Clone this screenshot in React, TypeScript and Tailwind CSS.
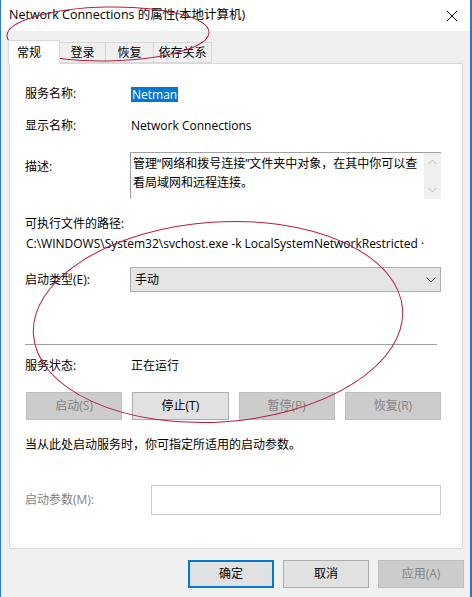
import React from "react";

const FONT = { fontFamily: '"Open Sans", "Noto Sans CJK SC", sans-serif' };

function Btn({ label, disabled, primary, className = "" }: { label: string; disabled?: boolean; primary?: boolean; className?: string }) {
  const base = "flex items-center justify-center text-[12px] ";
  const look = disabled
    ? "bg-[#cccccc] border border-[#bfbfbf] text-[#838383]"
    : primary
    ? "bg-[#e1e1e1] border-2 border-[#0078d7] text-black"
    : "bg-[#e1e1e1] border border-[#adadad] text-black";
  return <div className={base + look + " " + className}>{label}</div>;
}

export default function App() {
  return (
    <div className="relative w-[472px] h-[597px] bg-[#f0f0f0] border-l border-r-2 border-[#2a7ad3] text-[12px] text-black overflow-hidden" style={FONT}>
      {/* title bar */}
      <div className="h-[31px] bg-white flex items-center justify-between pl-[8px] pr-[8px]">
        <span className="text-[12.5px]">Network Connections 的属性(本地计算机)</span>
        <svg width="12" height="12" viewBox="0 0 12 12" className="mr-[4px]">
          <path d="M1 1 L11 11 M11 1 L1 11" stroke="#000" strokeWidth="1" />
        </svg>
      </div>

      {/* tabs */}
      <div className="flex items-end h-[32px] pl-[7px] pt-[8px]">
        <div className="h-[24px] w-[52px] bg-white border border-b-0 border-[#d9d9d9] flex items-center pl-[8px] relative z-10 -mb-px">常规</div>
        <div className="h-[21px] w-[46px] border border-l-0 border-[#d9d9d9] flex items-center justify-center">登录</div>
        <div className="h-[21px] w-[48px] border border-l-0 border-[#d9d9d9] flex items-center justify-center">恢复</div>
        <div className="h-[21px] w-[58px] border border-l-0 border-[#d9d9d9] flex items-center justify-center">依存关系</div>
      </div>

      {/* panel */}
      <div className="ml-[8px] mr-[7px] h-[486px] bg-white border border-[#d9d9d9] pl-[15px] pr-[21px] flex flex-col">
        <div className="flex items-center h-[20px] mt-[20px]">
          <div className="w-[106px]">服务名称:</div>
          <div className="bg-[#0078d7] text-white px-px leading-[15px]">Netman</div>
        </div>
        <div className="flex items-center h-[20px] mt-[12px]">
          <div className="w-[106px]">显示名称:</div>
          <div>Network Connections</div>
        </div>
        <div className="flex items-start mt-[16px]">
          <div className="w-[105px] mt-[6px]">描述:</div>
          <div className="flex-1 h-[47px] border border-[#a0a0a0] border-r-0 border-b-0 flex">
            <div className="flex-1 pl-[2px] pt-[1px] leading-[19px]">
              管理“网络和拨号连接”文件夹中对象，在其中你可以查看局域网和远程连接。
            </div>
            <div className="w-[17px] bg-[#f0f0f0] flex flex-col justify-between items-center py-[6px]">
              <svg width="9" height="6" viewBox="0 0 9 6"><path d="M0.5 5 L4.5 1 L8.5 5" stroke="#c2c2c2" fill="none" /></svg>
              <svg width="9" height="6" viewBox="0 0 9 6"><path d="M0.5 1 L4.5 5 L8.5 1" stroke="#c2c2c2" fill="none" /></svg>
            </div>
          </div>
        </div>
        <div className="h-[20px] flex items-center mt-[15px]">可执行文件的路径:</div>
        <div className="h-[20px] flex items-center whitespace-nowrap overflow-hidden pl-px">
          C:\WINDOWS\System32\svchost.exe -k LocalSystemNetworkRestricted ·
        </div>
        <div className="flex items-center mt-[13px]">
          <div className="w-[105px]">启动类型(E):</div>
          <div className="flex-1 h-[25px] bg-[#e5e5e5] border border-[#adadad] flex items-center justify-between pl-[4px] pr-[4px]">
            <span>手动</span>
            <svg width="10" height="6" viewBox="0 0 10 6"><path d="M0.5 0.5 L5 5 L9.5 0.5" stroke="#555" fill="none" /></svg>
          </div>
        </div>
        <div className="h-px bg-[#a0a0a0] mt-[52px] mr-[4px]" />
        <div className="flex items-center h-[20px] mt-[11px]">
          <div className="w-[106px]">服务状态:</div>
          <div>正在运行</div>
        </div>
        <div className="grid grid-cols-4 gap-x-[10px] mt-[16px] pl-px">
          <Btn label="启动(S)" disabled className="h-[28px]" />
          <Btn label="停止(T)" className="h-[28px]" />
          <Btn label="暂停(P)" disabled className="h-[28px]" />
          <Btn label="恢复(R)" disabled className="h-[28px]" />
        </div>
        <div className="h-[20px] flex items-center mt-[15px]">当从此处启动服务时，你可指定所适用的启动参数。</div>
        <div className="flex items-center mt-[30px]">
          <div className="w-[126px] text-[#838383]">启动参数(M):</div>
          <div className="flex-1 h-[30px] border border-[#cccccc] bg-white" />
        </div>
      </div>

      {/* bottom buttons */}
      <div className="flex justify-end gap-x-[9px] mt-[11px] pr-[6px]">
        <Btn label="确定" primary className="w-[86px] h-[28px]" />
        <Btn label="取消" className="w-[86px] h-[28px]" />
        <Btn label="应用(A)" disabled className="w-[86px] h-[28px]" />
      </div>

      {/* red annotation ellipses */}
      <svg className="absolute left-0 top-0 pointer-events-none" width="472" height="597" viewBox="0 0 472 597">
        <ellipse cx="107" cy="34" rx="101" ry="27" fill="none" stroke="#b51e3c" strokeWidth="1" transform="rotate(-1 107 34)" />
        <ellipse cx="217" cy="322" rx="185" ry="100" fill="none" stroke="#b51e3c" strokeWidth="1" transform="rotate(-4 217 322)" />
      </svg>
    </div>
  );
}
